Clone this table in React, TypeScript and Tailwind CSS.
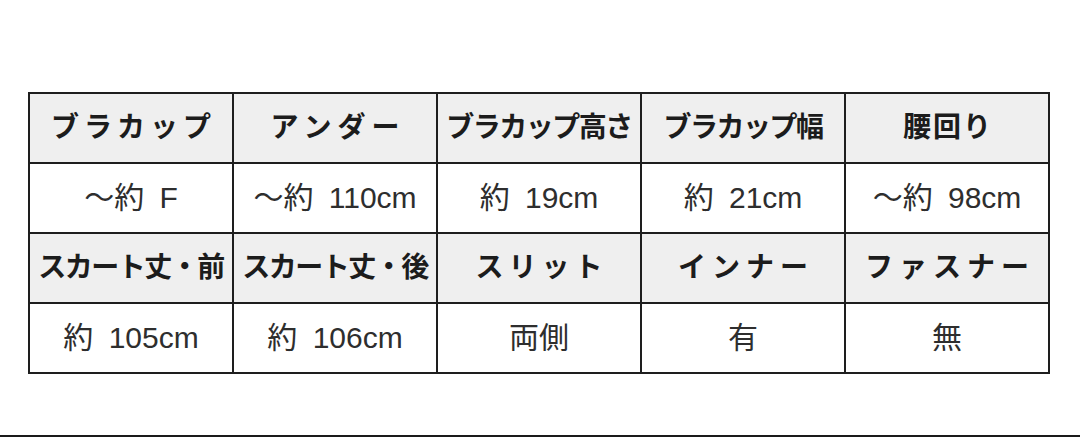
type Cell = { text: string; track?: string }

const rows: { cells: Cell[]; head: boolean }[] = [
  {
    head: true,
    cells: [
      { text: "ブラカップ", track: "tracking-[5px] pl-[5px]" },
      { text: "アンダー", track: "tracking-[6px] pl-[6px]" },
      { text: "ブラカップ高さ", track: "tracking-[-1.5px]" },
      { text: "ブラカップ幅", track: "tracking-[-1.5px]" },
      { text: "腰回り", track: "tracking-[2px] pl-[2px]" },
    ],
  },
  {
    head: false,
    cells: [{ text: "～約 F" }, { text: "～約 110cm" }, { text: "約 19cm" }, { text: "約 21cm" }, { text: "～約 98cm" }],
  },
  {
    head: true,
    cells: [
      { text: "スカート丈・前", track: "tracking-[-1.5px]" },
      { text: "スカート丈・後", track: "tracking-[-1.5px]" },
      { text: "スリット", track: "tracking-[5px] pl-[5px]" },
      { text: "インナー", track: "tracking-[6px] pl-[6px]" },
      { text: "ファスナー", track: "tracking-[6px] pl-[6px]" },
    ],
  },
  {
    head: false,
    cells: [{ text: "約 105cm" }, { text: "約 106cm" }, { text: "両側" }, { text: "有" }, { text: "無" }],
  },
]

export default function App() {
  return (
    <div className="flex h-[437px] w-[1080px] flex-col bg-white font-['Liberation_Sans','Noto_Sans_CJK_JP',sans-serif]">
      <table className="ml-[28px] mt-[92px] w-[1022px] table-fixed border-collapse">
        <tbody>
          {rows.map((row, ri) => (
            <tr key={ri} className={row.head ? "h-[70px] bg-[#efefef]" : "h-[70px] bg-white"}>
              {row.cells.map((c, ci) => (
                <td
                  key={ci}
                  className={
                    row.head
                      ? "whitespace-nowrap border-2 border-[#1e1e1e] p-0 text-center text-[28px] font-bold leading-none text-[#1c1c1c]"
                      : "whitespace-nowrap border-2 border-[#1e1e1e] p-0 text-center text-[30px] leading-none text-[#2e2e2e] [word-spacing:7px]"
                  }
                >
                  <span className={c.track ?? ""}>{c.text}</span>
                </td>
              ))}
            </tr>
          ))}
        </tbody>
      </table>
      <div className="mt-auto h-[2px] w-full bg-[#1a1a1a]" />
    </div>
  )
}
